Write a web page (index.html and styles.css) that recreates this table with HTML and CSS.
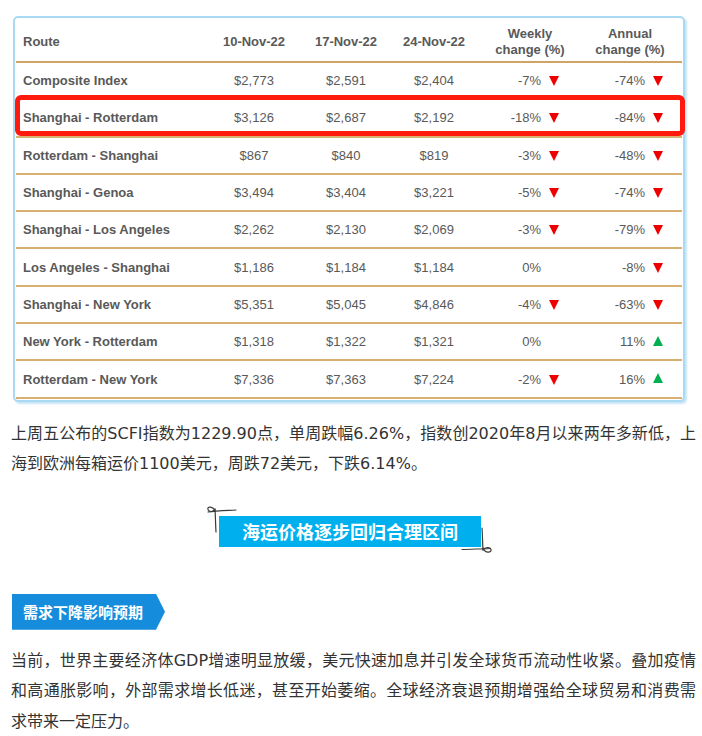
FILE: index.html
```html
<!DOCTYPE html>
<html lang="zh">
<head>
<meta charset="utf-8">
<title>SCFI</title>
<link rel="stylesheet" href="styles.css">
</head>
<body>
<div class="page">
  <div class="frame">
    <div class="grid">
      <div class="row head">
        <div class="c-route">Route</div>
        <div class="c-num">10-Nov-22</div>
        <div class="c-num">17-Nov-22</div>
        <div class="c-num">24-Nov-22</div>
        <div class="c-num">Weekly<br>change (%)</div>
        <div class="c-num">Annual<br>change (%)</div>
      </div>
      <div class="row">
        <div class="c-route">Composite Index</div>
        <div class="c-num">$2,773</div><div class="c-num">$2,591</div><div class="c-num">$2,404</div>
        <div class="c-wk"><span class="v">-7%</span><i class="down"></i></div>
        <div class="c-an"><span class="v">-74%</span><i class="down"></i></div>
      </div>
      <div class="row hl">
        <div class="c-route">Shanghai - Rotterdam</div>
        <div class="c-num">$3,126</div><div class="c-num">$2,687</div><div class="c-num">$2,192</div>
        <div class="c-wk"><span class="v">-18%</span><i class="down"></i></div>
        <div class="c-an"><span class="v">-84%</span><i class="down"></i></div>
        <div class="redbox"></div>
      </div>
      <div class="row">
        <div class="c-route">Rotterdam - Shanghai</div>
        <div class="c-num">$867</div><div class="c-num">$840</div><div class="c-num">$819</div>
        <div class="c-wk"><span class="v">-3%</span><i class="down"></i></div>
        <div class="c-an"><span class="v">-48%</span><i class="down"></i></div>
      </div>
      <div class="row">
        <div class="c-route">Shanghai - Genoa</div>
        <div class="c-num">$3,494</div><div class="c-num">$3,404</div><div class="c-num">$3,221</div>
        <div class="c-wk"><span class="v">-5%</span><i class="down"></i></div>
        <div class="c-an"><span class="v">-74%</span><i class="down"></i></div>
      </div>
      <div class="row">
        <div class="c-route">Shanghai - Los Angeles</div>
        <div class="c-num">$2,262</div><div class="c-num">$2,130</div><div class="c-num">$2,069</div>
        <div class="c-wk"><span class="v">-3%</span><i class="down"></i></div>
        <div class="c-an"><span class="v">-79%</span><i class="down"></i></div>
      </div>
      <div class="row">
        <div class="c-route">Los Angeles - Shanghai</div>
        <div class="c-num">$1,186</div><div class="c-num">$1,184</div><div class="c-num">$1,184</div>
        <div class="c-wk"><span class="v">0%</span></div>
        <div class="c-an"><span class="v">-8%</span><i class="down"></i></div>
      </div>
      <div class="row">
        <div class="c-route">Shanghai - New York</div>
        <div class="c-num">$5,351</div><div class="c-num">$5,045</div><div class="c-num">$4,846</div>
        <div class="c-wk"><span class="v">-4%</span><i class="down"></i></div>
        <div class="c-an"><span class="v">-63%</span><i class="down"></i></div>
      </div>
      <div class="row">
        <div class="c-route">New York - Rotterdam</div>
        <div class="c-num">$1,318</div><div class="c-num">$1,322</div><div class="c-num">$1,321</div>
        <div class="c-wk"><span class="v">0%</span></div>
        <div class="c-an"><span class="v">11%</span><i class="up"></i></div>
      </div>
      <div class="row">
        <div class="c-route">Rotterdam - New York</div>
        <div class="c-num">$7,336</div><div class="c-num">$7,363</div><div class="c-num">$7,224</div>
        <div class="c-wk"><span class="v">-2%</span><i class="down"></i></div>
        <div class="c-an"><span class="v">16%</span><i class="up"></i></div>
      </div>
    </div>
  </div>

  <p class="para p1">上周五公布的SCFI指数为1229.90点，单周跌幅6.26%，指数创2020年8月以来两年多新低，上海到欧洲每箱运价1100美元，周跌72美元，下跌6.14%。</p>

  <div class="title-row">
    <div class="title">
      海运价格逐步回归合理区间
      <svg class="deco deco-tl" width="34" height="30" viewBox="0 0 34 30" fill="none" stroke="#3a3a3a" stroke-width="1.2" stroke-linecap="round">
        <path d="M3 8 C 12 6.5, 22 6.5, 31 6"/>
        <path d="M10 5 C 10.5 12, 10.5 20, 11 28"/>
        <path d="M10 7 C 8 2, 2 2, 3 5.5 C 4 8.5, 8.5 8, 10 5"/>
      </svg>
      <svg class="deco deco-br" width="36" height="30" viewBox="0 0 36 30" fill="none" stroke="#3a3a3a" stroke-width="1.2" stroke-linecap="round">
        <path d="M3 24.5 C 12 24, 22 24, 31 23.5"/>
        <path d="M23 3 C 23.5 10, 23.5 17, 24 25"/>
        <path d="M24 23 C 26 28.5, 33 28, 32 24.5 C 31 21.5, 26 22, 24 25"/>
      </svg>
    </div>
  </div>

  <div class="tag">需求下降影响预期</div>

  <p class="para p2">当前，世界主要经济体GDP增速明显放缓，美元快速加息并引发全球货币流动性收紧。叠加疫情和高通胀影响，外部需求增长低迷，甚至开始萎缩。全球经济衰退预期增强给全球贸易和消费需求带来一定压力。</p>
</div>
</body>
</html>
```

FILE: styles.css
```css
* { box-sizing: border-box; }
html, body { margin: 0; padding: 0; background: #fff; }
body { width: 702px; }

.page { padding-top: 16px; }

.frame {
  margin-left: 13px;
  width: 672px;
  border: 2px solid #a9d9f3;
  border-radius: 5px;
  padding: 0 1px 1px 1px;
  box-shadow: 2px 2px 2px #c6e5f7;
  background: #fff;
}

.grid {
  font-family: "Liberation Sans", Arial, sans-serif;
  font-size: 13px;
  color: #595959;
}

.row {
  display: grid;
  grid-template-columns: 186px 104px 80px 96px 96px 104px;
  align-items: center;
  height: 37.3px;
  border-bottom: 2px solid #d8b071;
  position: relative;
}
.row.head {
  height: 45px;
  padding-top: 4px;
  font-weight: bold;
  line-height: 16px;
  border-bottom-color: #cfa466;
}

.c-route { padding-left: 7px; font-weight: bold; white-space: nowrap; }
.c-num { text-align: center; white-space: nowrap; }

.c-wk, .c-an { display: flex; align-items: center; }
.c-wk .v { width: 59px; text-align: right; margin-right: 8px; }
.c-an .v { width: 67px; text-align: right; margin-right: 8px; }

.down, .up {
  display: block;
  width: 0; height: 0;
  border-left: 5.5px solid transparent;
  border-right: 5.5px solid transparent;
  margin-top: 1px;
}
.down { border-top: 10px solid #ee0000; }
.up { border-bottom: 10px solid #00b050; margin-top: -2px; }

.redbox {
  position: absolute;
  left: -1px; right: -3px; top: -5px; bottom: 0;
  border: 5px solid #ff1a0d;
  border-radius: 6px;
  pointer-events: none;
}

.para {
  margin: 0;
  padding: 0 6px 0 11px;
  font-family: "DejaVu Sans", "Noto Sans CJK SC", sans-serif;
  font-size: 16px;
  line-height: 30.5px;
  color: #333;
  text-align: justify;
}
.p1 { margin-top: 17px; }
.p2 { margin-top: 16px; }

.title-row {
  display: flex;
  justify-content: center;
  margin-top: 36px;
  padding-right: 2px;
}
.title {
  position: relative;
  width: 262px;
  height: 31px;
  background: #00b0ee;
  color: #fff;
  font-family: "Noto Sans CJK SC", sans-serif;
  font-weight: bold;
  font-size: 18px;
  line-height: 31px;
  text-align: center;
}
.deco { position: absolute; }
.deco-tl { left: -14px; top: -12px; }
.deco-br { right: -14px; bottom: -8px; }

.tag {
  margin-top: 47px;
  margin-left: 12px;
  width: 153px;
  height: 36px;
  background: #168ddc;
  color: #fff;
  font-family: "Noto Sans CJK SC", sans-serif;
  font-weight: bold;
  font-size: 15px;
  line-height: 36px;
  padding-left: 11px;
  clip-path: polygon(0 0, 144px 0, 153px 50%, 144px 100%, 0 100%);
}
```
